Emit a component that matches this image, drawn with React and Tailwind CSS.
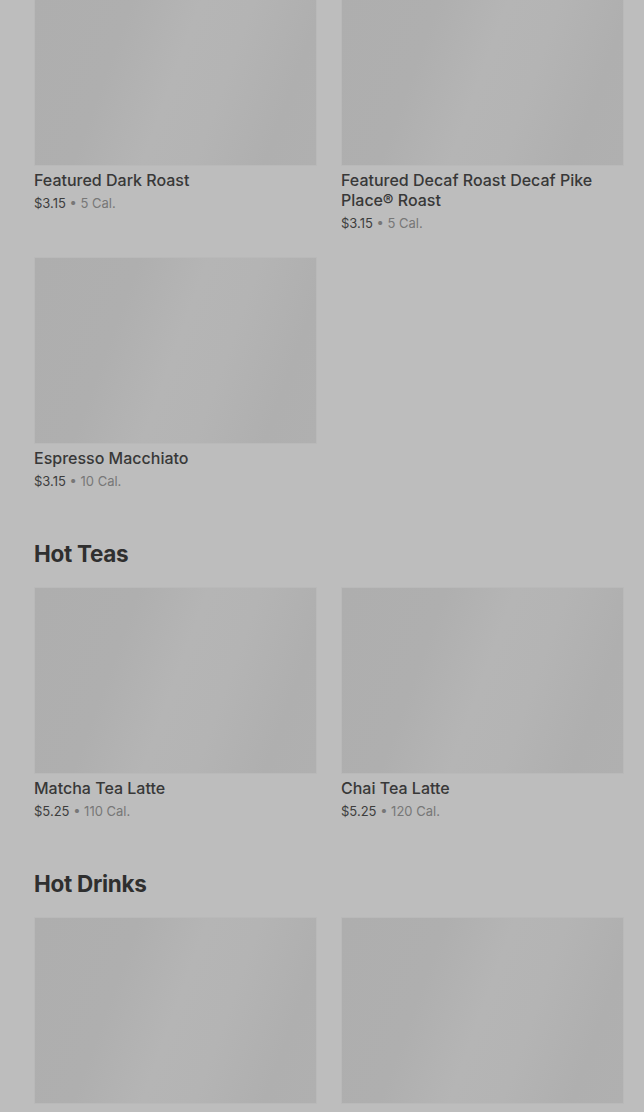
import React from 'react';

const sections = [
  {
    title: null,
    items: [
      { name: 'Featured Dark Roast', price: '$3.15', cal: '5 Cal.' },
      { name: 'Featured Decaf Roast Decaf Pike Place® Roast', price: '$3.15', cal: '5 Cal.' },
      { name: 'Espresso Macchiato', price: '$3.15', cal: '10 Cal.' },
    ],
  },
  {
    title: 'Hot Teas',
    items: [
      { name: 'Matcha Tea Latte', price: '$5.25', cal: '110 Cal.' },
      { name: 'Chai Tea Latte', price: '$5.25', cal: '120 Cal.' },
    ],
  },
  {
    title: 'Hot Drinks',
    items: [
      { name: 'White Hot Chocolate', price: '$4.45', cal: '430 Cal.' },
      { name: 'Hot Chocolate', price: '$4.45', cal: '370 Cal.' },
    ],
  },
];

const MenuCard = ({ item }) => (
  <div>
    <div className="h-[187px] border border-[#b9b9b9] bg-[linear-gradient(110deg,#aeaeae_0%,#afafaf_30%,#b5b5b5_50%,#b4b4b4_65%,#afafaf_85%,#b0b0b0_100%)]" />
    <div className="mt-[4px] text-[16px] leading-[20px] font-medium text-[#383838]">{item.name}</div>
    <div className="mt-[3px] text-[13px] leading-[20px] text-[#3d3d3d]">
      {item.price}
      <span className="text-[#777]"> • {item.cal}</span>
    </div>
  </div>
);

export default function App() {
  return (
    <div className="min-h-screen h-[1112px] overflow-hidden bg-[#bdbdbd] font-['Inter','Liberation_Sans',sans-serif]">
      <div className="mt-[-21px] pl-[34px] pr-[20px]">
        {sections.map((section, i) => (
          <div key={i} className={i > 0 ? 'mt-[47px]' : ''}>
            {section.title && (
              <h2 className="mb-[17px] text-[22.5px] leading-[32px] font-bold tracking-[-0.3px] text-[#2f2f2f]">
                {section.title}
              </h2>
            )}
            <div className="grid grid-cols-2 gap-x-[24px] gap-y-[24px]">
              {section.items.map((item) => (
                <MenuCard key={item.name} item={item} />
              ))}
            </div>
          </div>
        ))}
      </div>
    </div>
  );
}
